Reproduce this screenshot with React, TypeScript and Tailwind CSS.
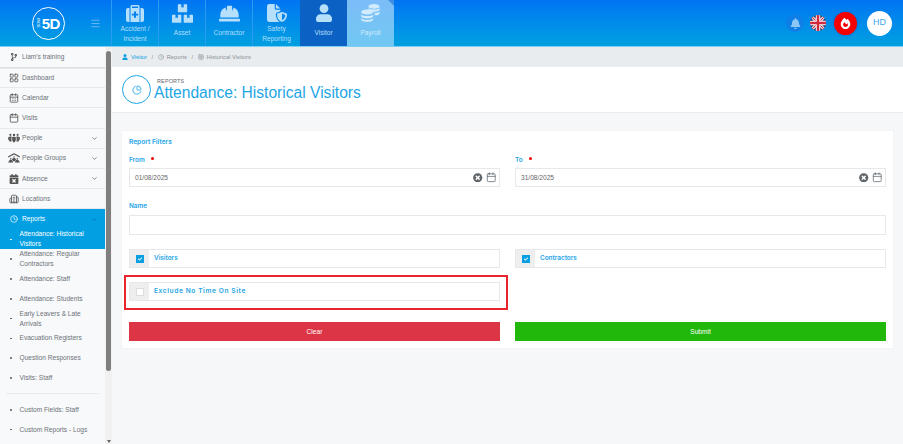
import React from "react";
import { FaBoxes, FaHardHat, FaCalendarTimes, FaCodeBranch, FaBell, FaTimesCircle, FaCheck } from "react-icons/fa";
import { FaFileShield, FaPeopleGroup, FaPeopleRoof, FaFire, FaUser } from "react-icons/fa6";
import { Building2, CalendarDays, Calendar, ChevronDown, ChevronUp, Clock, LayoutGrid, Menu, PieChart, Table } from "lucide-react";

function MedCase() {
  return (
    <svg viewBox="0 0 18 17" className="w-[18px] h-[17px]" fill="currentColor">
      <path d="M6 0h6a1.5 1.5 0 0 1 1.5 1.5V3H12V1.6H6V3H4.5V1.5A1.5 1.5 0 0 1 6 0z" />
      <path d="M2 3h1.5v14H2a2 2 0 0 1-2-2V5a2 2 0 0 1 2-2zM14.5 3H16a2 2 0 0 1 2 2v10a2 2 0 0 1-2 2h-1.5z" />
      <path fillRule="evenodd" d="M4.5 3h9v14h-9zM8 6.5v2.2H5.8v1.8H8v2.2h2v-2.2h2.2V8.7H10V6.5z" />
    </svg>
  );
}

function Person() {
  return (
    <svg viewBox="0 0 16 18" className="w-[16px] h-[18px]" fill="currentColor">
      <circle cx="8" cy="4.6" r="4.4" />
      <path d="M4.6 10.2h6.8A4.6 4.6 0 0 1 16 14.8V16a2 2 0 0 1-2 2H2a2 2 0 0 1-2-2v-1.2a4.6 4.6 0 0 1 4.6-4.6z" />
    </svg>
  );
}

function Coins() {
  return (
    <svg viewBox="0 0 19 18" className="w-[19px] h-[18px]" fill="currentColor">
      <ellipse cx="13" cy="2.4" rx="5.6" ry="2.3" />
      <path d="M7.6 4c.9 1 3 1.6 5.4 1.6S17.6 5 18.6 4v1.6c0 1.3-2.5 2.3-5.6 2.3-1 0-2-.1-2.8-.3-.7-.7-1.6-1.2-2.6-1.6z" />
      <path d="M13 9.2c2.4 0 4.6-.6 5.6-1.7v1.8c0 1.1-1.8 2-4.2 2.2a4 4 0 0 0-1.7-2.3z" />
      <ellipse cx="6.2" cy="8" rx="6" ry="2.4" />
      <path d="M.2 10.4c1 1.1 3.4 1.7 6 1.7s5-.6 6-1.7v1.6c0 1.3-2.7 2.4-6 2.4s-6-1.1-6-2.4z" />
      <path d="M.2 14.3c1 1.1 3.4 1.7 6 1.7s5-.6 6-1.7v1.3c0 1.3-2.7 2.4-6 2.4s-6-1.1-6-2.4z" />
    </svg>
  );
}

const navItems = [
  { label: ["Accident /", "Incident"], icon: <MedCase />, cls: "border-r border-[#2b9cf0]" },
  { label: ["Asset"], icon: <FaBoxes size={21} />, cls: "border-r border-[#2b9cf0]" },
  { label: ["Contractor"], icon: <FaHardHat size={21} />, cls: "border-r border-[#2b9cf0]" },
  { label: ["Safety", "Reporting"], icon: <FaFileShield size={20} />, cls: "" },
  { label: ["Visitor"], icon: <Person />, cls: "bg-[#0b62c4]" },
  { label: ["Payroll"], icon: <Coins />, cls: "bg-gradient-to-b from-[#7cbdf8] to-[#70c8f2] text-[#d2ebfd]" },
];

const ic = "w-[10px] h-[10px] text-[#555]";
const sideItems = [
  { label: "Dashboard", icon: <LayoutGrid className={ic} strokeWidth={2} /> },
  { label: "Calendar", icon: <CalendarDays className={ic} strokeWidth={2} /> },
  { label: "Visits", icon: <Calendar className={ic} strokeWidth={2} /> },
  { label: "People", icon: <FaPeopleGroup className="w-[12px] h-[10px] text-[#555]" />, chev: true },
  { label: "People Groups", icon: <FaPeopleRoof className="w-[12px] h-[10px] text-[#555]" />, chev: true },
  { label: "Absence", icon: <FaCalendarTimes className="w-[10px] h-[10px] text-[#555]" />, chev: true },
  { label: "Locations", icon: <Building2 className={ic} strokeWidth={2} /> },
];

const subItems = [
  "Attendance: Regular Contractors",
  "Attendance: Staff",
  "Attendance: Students",
  "Early Leavers & Late Arrivals",
  "Evacuation Registers",
  "Question Responses",
  "Visits: Staff",
];

function SubItem({ text }: { text: string }) {
  return (
    <div className="h-[19.8px] flex items-center pl-[10px] pr-[14px] text-[#6c7278]">
      <span className="w-[1.5px] h-[1.5px] mr-[8px] shrink-0 rounded-full bg-[#555]" />
      <span className="text-[6.6px] leading-[10px]">{text}</span>
    </div>
  );
}

function DateField({ value }: { value: string }) {
  return (
    <div className="h-[19px] border border-[#e6e8ea] flex items-center pl-[5px] pr-[3px]">
      <span className="text-[6.6px] text-[#666] flex-1">{value}</span>
      <FaTimesCircle className="w-[9.5px] h-[9.5px] text-[#5f666c] mr-[3px]" />
      <Calendar className="w-[10.5px] h-[10.5px] text-[#5f666c]" strokeWidth={1.7} />
    </div>
  );
}

function CheckRow({ label, checked, wide }: { label: string; checked?: boolean; wide?: boolean }) {
  return (
    <div className="h-[19px] border border-[#e6e8ea] flex items-center">
      <div className="w-[19px] h-full bg-[#eeeeee] flex items-center justify-center shrink-0">
        {checked ? (
          <span className="w-[8px] h-[8px] bg-[#0a9fe3] flex items-center justify-center">
            <FaCheck className="w-[4px] h-[4px] text-white" />
          </span>
        ) : (
          <span className="w-[8px] h-[8px] bg-white border border-[#dddddd]" />
        )}
      </div>
      <span className={`ml-[5px] font-semibold text-[#1ea5e6] font-['Inter',sans-serif] ${wide ? "text-[6.6px] tracking-[0.6px]" : "text-[6.4px]"}`}>{label}</span>
    </div>
  );
}

function FieldLabel({ text, required }: { text: string; required?: boolean }) {
  return (
    <div className="h-[17px] pt-[5px] flex items-start font-['Inter',sans-serif] text-[6.4px] leading-[8px] font-semibold text-[#1ea5e6]">
      {text}
      {required && <span className="w-[3px] h-[3px] rounded-full bg-[#f00000] ml-[6px] mt-[1px]" />}
    </div>
  );
}

function Logo() {
  return (
    <div className="w-[33px] h-[33px] rounded-full border-[1.5px] border-white flex items-center justify-center text-white">
      <span className="text-[4px] [writing-mode:vertical-rl] rotate-180 leading-none mr-[0.5px]">SOW</span>
      <span className="text-[15px] font-bold leading-none tracking-[-0.5px]">5D</span>
    </div>
  );
}

function Flag() {
  return (
    <svg viewBox="0 0 32 32" className="w-[16px] h-[16px] rounded-full">
      <rect width="32" height="32" fill="#2b3a67" />
      <path d="M0 0L32 32M32 0L0 32" stroke="#fff" strokeWidth="6" />
      <path d="M0 0L32 32M32 0L0 32" stroke="#d3293f" strokeWidth="2.2" />
      <path d="M16 0V32M0 16H32" stroke="#fff" strokeWidth="9" />
      <path d="M16 0V32M0 16H32" stroke="#d3293f" strokeWidth="5" />
    </svg>
  );
}

export default function App() {
  return (
    <div className="w-[903px] h-[444px] overflow-hidden flex flex-col bg-[#f6f7f9] font-['Liberation_Sans',Arial,sans-serif]">
      <header className="h-[47px] shrink-0 flex bg-gradient-to-b from-[#0074f3] to-[#02a0e0] border-b border-[#7fcdf0]">
        <div className="w-[112px] shrink-0 flex items-center pl-[32px] border-r border-[#2b9cf0]">
          <Logo />
          <Menu className="w-[11px] h-[11px] ml-[25px] text-[#8cc8f5]" strokeWidth={1.5} />
        </div>
        {navItems.map((n, i) => (
          <div key={i} className={`relative w-[47px] shrink-0 flex flex-col items-center text-[#b5dffb] ${n.cls}`}>
            <div className="h-[22px] mt-[2px] flex items-center justify-center shrink-0">{n.icon}</div>
            <div className={`text-center text-[6.6px] leading-[10px] ${n.label.length === 1 ? "mt-[4px]" : "mt-0"}`}>
              {n.label.map((l) => (
                <div key={l}>{l}</div>
              ))}
            </div>
            {i === 5 && (
              <span className="absolute top-0 right-0 w-0 h-0 border-t-[6px] border-l-[6px] border-t-[#3f8fe0] border-l-transparent" />
            )}
          </div>
        ))}
        <div className="flex-1 flex items-center justify-end pr-[11px]">
          <div className="w-[18px] h-[18px] rounded-full bg-[#0f7fe8] flex items-center justify-center">
            <FaBell className="w-[11px] h-[11px] text-[#8cc8f5]" />
          </div>
          <div className="ml-[6px]"><Flag /></div>
          <div className="ml-[8px] w-[23px] h-[23px] rounded-full bg-[#f50000] flex items-center justify-center shadow-[0_0_3px_#1261c9]">
            <FaFire className="w-[11px] h-[11px] text-white" />
          </div>
          <div className="ml-[10px] w-[25px] h-[25px] rounded-full bg-white flex items-center justify-center text-[9px] text-[#3ba7ea]">HD</div>
        </div>
      </header>

      <div className="flex-1 min-h-0 flex">
        <aside className="w-[112px] shrink-0 flex bg-[#f8f9fb]">
          <div className="w-[105px] shrink-0 overflow-hidden">
            <div className="h-[21px] flex items-center pl-[10px] text-[#6c7278] text-[6.6px] border-b border-[#dcdfe2] shadow-[0_1px_0_#e8eaec]">
              <FaCodeBranch className="w-[8px] h-[8px] text-[#555] mr-[4px] shrink-0" />
              Liam's training
            </div>
            {sideItems.map((s) => (
              <div key={s.label} className="h-[20.2px] flex items-center text-[#6c7278] text-[6.6px] border-b border-[#e7e9eb]">
                <span className="w-[22px] flex justify-center pl-[6px] shrink-0">{s.icon}</span>
                <span className="flex-1">{s.label}</span>
                {s.chev && <ChevronDown className="w-[7px] h-[7px] mr-[7px] text-[#666]" strokeWidth={2.5} />}
              </div>
            ))}
            <div className="bg-[#02a0e3]">
              <div className="h-[20px] flex items-center text-white text-[6.6px]">
                <span className="w-[22px] flex justify-center pl-[6px] shrink-0">
                  <Clock className="w-[8px] h-[8px] text-white" strokeWidth={2} />
                </span>
                <span className="flex-1">Reports</span>
                <ChevronDown className="w-[7px] h-[7px] mr-[7px] text-[#0a6fa8]" strokeWidth={2.5} />
              </div>
              <div className="h-[20px] flex items-center pl-[10px] pr-[14px] text-white">
                <span className="w-[1.5px] h-[1.5px] mr-[8px] shrink-0 rounded-full bg-white" />
                <span className="text-[6.6px] leading-[10px]">Attendance: Historical Visitors</span>
              </div>
            </div>
            {subItems.map((t) => (
              <SubItem key={t} text={t} />
            ))}
            <div className="h-px bg-[#e8eaec] mx-[6px] mt-[5.5px] mb-[5.5px]" />
            <SubItem text="Custom Fields: Staff" />
            <SubItem text="Custom Reports - Logs" />
          </div>
          <div className="w-[7px] shrink-0 bg-[#f1f1f1] flex flex-col items-center">
            <ChevronUp className="w-[5px] h-[3px] text-[#888] shrink-0" />
            <div className="w-[4.5px] h-[320px] mt-[1px] bg-[#7f7f7f] rounded-full" />
            <div className="flex-1" />
            <div className="w-0 h-0 mb-[1px] border-x-[2.5px] border-x-transparent border-t-[3px] border-t-[#666]" />
          </div>
        </aside>

        <main className="flex-1 min-w-0 flex flex-col">
          <div className="h-[20px] shrink-0 bg-[#e9ecef] flex items-center pl-[10px] text-[5.8px] text-[#8a9198]">
            <FaUser className="w-[6px] h-[6px] text-[#0a9fe3] mr-[3px]" />
            <span className="text-[#0a9fe3]">Visitor</span>
            <span className="mx-[4.5px]">/</span>
            <Clock className="w-[6px] h-[6px] mr-[3px]" strokeWidth={2} />
            <span>Reports</span>
            <span className="mx-[4.5px]">/</span>
            <Table className="w-[6px] h-[6px] mr-[3px]" strokeWidth={2} />
            <span>Historical Visitors</span>
          </div>
          <div className="h-[46px] shrink-0 bg-white border-b border-[#e9ecef] flex items-center pl-[10px]">
            <div className="w-[29px] h-[29px] rounded-full border border-[#1ea5e6] flex items-center justify-center mr-[3px]">
              <PieChart className="w-[10px] h-[10px] text-[#1ea5e6]" strokeWidth={2} />
            </div>
            <div>
              <div className="text-[5.4px] leading-[6px] text-[#666] tracking-[0.2px] ml-[3px]">REPORTS</div>
              <div className="text-[15.6px] leading-[18px] text-[#1ea5e6]">Attendance: Historical Visitors</div>
            </div>
          </div>
          <div className="flex-1 min-h-0 px-[10px] pt-[18px]">
            <div className="bg-white px-[7px] pt-[7px] h-[217px] shadow-[0_0_1px_#dfe2e5]">
              <div className="font-['Inter',sans-serif] text-[6.6px] leading-[8px] font-semibold text-[#1ea5e6]">Report Filters</div>
              <div className="grid grid-cols-2 gap-x-[15px] mt-[5px]">
                <div>
                  <FieldLabel text="From" required />
                  <DateField value="01/08/2025" />
                </div>
                <div>
                  <FieldLabel text="To" required />
                  <DateField value="31/08/2025" />
                </div>
              </div>
              <div className="mt-[15px] h-[13px] font-['Inter',sans-serif] text-[6.4px] leading-[8px] font-semibold text-[#1ea5e6]">Name</div>
              <div className="h-[20px] border border-[#e6e8ea]" />
              <div className="grid grid-cols-2 gap-x-[15px] mt-[14px]">
                <CheckRow label="Visitors" checked />
                <CheckRow label="Contractors" checked />
              </div>
              <div className="grid grid-cols-2 gap-x-[15px] mt-[7px]">
                <div className="-ml-[5px] -mr-[8px] border-2 border-[#e8242c] pl-[3px] pr-[6px] pt-[5px] pb-[7px]">
                  <CheckRow label="Exclude No Time On Site" wide />
                </div>
              </div>
              <div className="grid grid-cols-2 gap-x-[15px] mt-[12px]">
                <div className="h-[19px] bg-[#dc3545] flex items-center justify-center text-white text-[6.6px]">Clear</div>
                <div className="h-[19px] bg-[#22b80b] flex items-center justify-center text-white text-[6.6px]">Submit</div>
              </div>
            </div>
          </div>
        </main>
      </div>
    </div>
  );
}
